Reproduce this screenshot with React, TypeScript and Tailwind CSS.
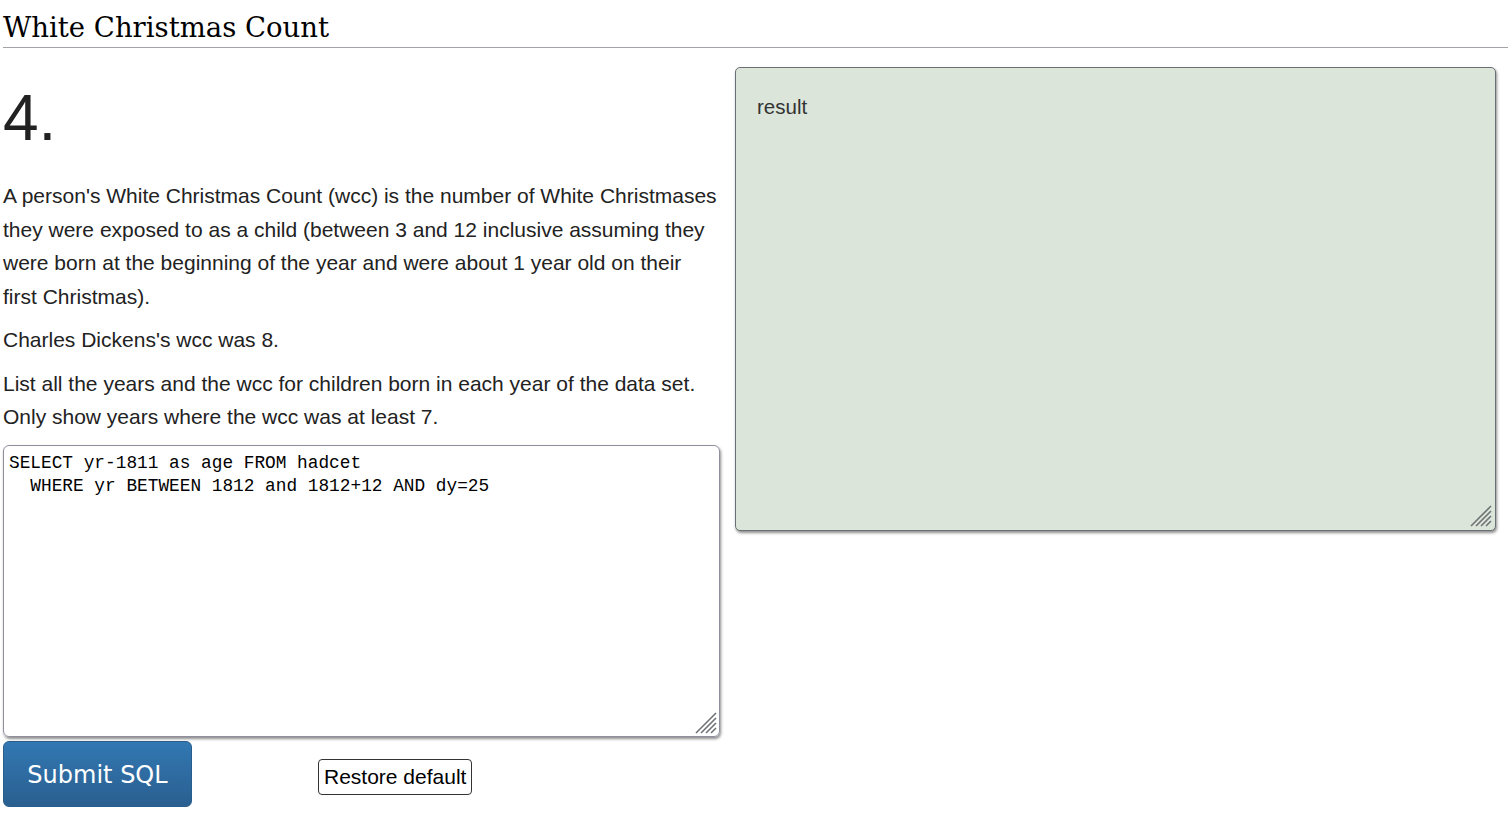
import React from "react";

function Grip({ className }: { className: string }) {
  return (
    <svg className={className} width="22" height="22" viewBox="0 0 22 22">
      <line x1="1" y1="21" x2="21" y2="1" stroke="#6f7275" strokeWidth="1.6" />
      <line x1="6" y1="21" x2="21" y2="6" stroke="#6f7275" strokeWidth="1.6" />
      <line x1="11" y1="21" x2="21" y2="11" stroke="#6f7275" strokeWidth="1.6" />
      <line x1="16" y1="21" x2="21" y2="16" stroke="#6f7275" strokeWidth="1.6" />
    </svg>
  );
}

export default function App() {
  return (
    <div className="w-[1510px] h-[826px] bg-white overflow-hidden text-[#222]" style={{ fontFamily: '"Liberation Sans", Arial, sans-serif' }}>
      <div className="pl-[3px] pr-[2px]">
        <h1 className="leading-[36px] pt-[9px] pb-[2px] border-b border-[#a2a4aa] text-black" style={{ fontFamily: '"DejaVu Serif", Georgia, serif', fontSize: "27.5px" }}>
          White Christmas Count
        </h1>
      </div>
      <div className="flex pl-[3px] pt-[19px] gap-[15px]">
        <div className="w-[717px] flex flex-col">
          <div className="text-[64px] leading-[64px] font-light pt-[19px] h-[105px] text-[#222]">4.</div>
          <p className="text-[21px] leading-[33.5px] mt-[7px]">
            A person's White Christmas Count (wcc) is the number of White Christmases they were exposed to as a child (between 3 and 12 inclusive assuming they were born at the beginning of the year and were about 1 year old on their first Christmas).
          </p>
          <p className="text-[21px] leading-[33.5px] mt-[10px]">Charles Dickens's wcc was 8.</p>
          <p className="text-[21px] leading-[33.5px] mt-[10px]">
            List all the years and the wcc for children born in each year of the data set. Only show years where the wcc was at least 7.
          </p>
          <div className="relative mt-[11px] w-[717px] h-[292px]">
            <textarea
              className="block w-full h-full resize-none border border-[#8f8f9d] rounded-[6px] shadow-[1px_2px_3px_rgba(0,0,0,0.45)] px-[5px] pt-[6px] pb-[5px] text-[17.8px] leading-[23px] text-black outline-none"
              style={{ fontFamily: '"Liberation Mono", "DejaVu Sans Mono", monospace' }}
              defaultValue={"SELECT yr-1811 as age FROM hadcet\n  WHERE yr BETWEEN 1812 and 1812+12 AND dy=25"}
            />
            <Grip className="absolute right-[3px] bottom-[3px] pointer-events-none" />
          </div>
          <div className="flex items-start mt-[4px]">
            <button
              className="w-[189px] h-[66px] pt-[3px] rounded-[6px] border border-[#285e8e] text-white text-[24px] bg-gradient-to-b from-[#3278b3] to-[#2a5f90]"
              style={{ fontFamily: 'Tahoma, "DejaVu Sans", sans-serif' }}
            >
              Submit SQL
            </button>
            <button className="ml-[126px] mt-[18px] h-[36px] px-[5px] border border-[#333] rounded-[4px] bg-white text-[21px] text-black leading-[22px]">
              Restore default
            </button>
          </div>
        </div>
        <div className="w-[761px] h-[464px] bg-[#dbe5da] border border-[#6b7075] rounded-[5px] shadow-[1px_2px_3px_rgba(0,0,0,0.45)] px-[21px] pt-[24px] relative">
          <div className="text-[20.5px] text-[#333]">result</div>
          <Grip className="absolute right-[3px] bottom-[3px]" />
        </div>
      </div>
    </div>
  );
}
